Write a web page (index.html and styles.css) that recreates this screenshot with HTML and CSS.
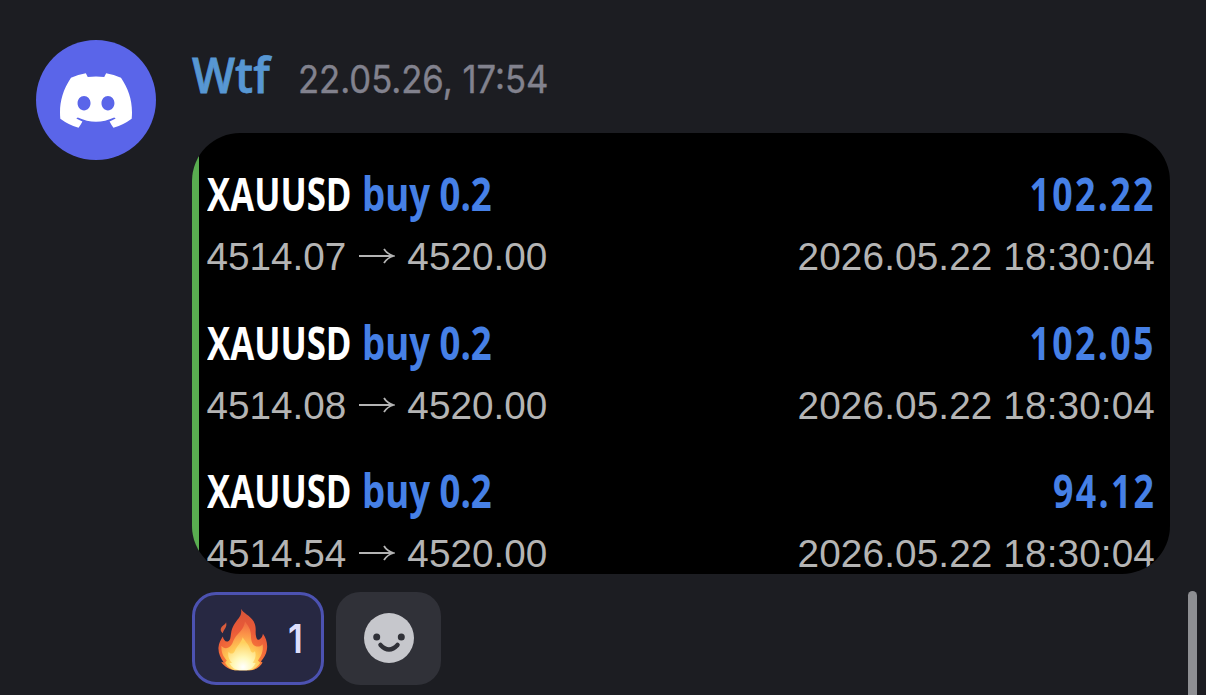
FILE: index.html
```
<!DOCTYPE html>
<html lang="en">
<head>
    <meta charset="UTF-8">
    <meta name="viewport" content="width=device-width, initial-scale=1.0">
    <title>Messages</title>
    <link rel="stylesheet" href="styles.css">
</head>
<body>
    <div class="message">
        <div class="avatar">
            <svg class="avatar-logo" viewBox="0 0 127.14 96.36">
                <path fill="#fff" d="M107.7,8.07A105.15,105.15,0,0,0,81.47,0a72.06,72.06,0,0,0-3.36,6.83A97.68,97.68,0,0,0,49,6.83,72.37,72.37,0,0,0,45.64,0,105.89,105.89,0,0,0,19.39,8.09C2.79,32.65-1.71,56.6.54,80.21h0A105.73,105.73,0,0,0,32.71,96.36,77.7,77.7,0,0,0,39.6,85.25a68.42,68.42,0,0,1-10.85-5.18c.91-.66,1.8-1.34,2.66-2a75.57,75.57,0,0,0,64.32,0c.87.71,1.76,1.39,2.66,2a68.68,68.68,0,0,1-10.87,5.19,77,77,0,0,0,6.89,11.1A105.25,105.25,0,0,0,126.6,80.22h0C129.24,52.84,122.09,29.11,107.7,8.07ZM42.45,65.69C36.18,65.69,31,60,31,53s5-12.74,11.43-12.74S54,46,53.89,53,48.84,65.69,42.45,65.69Zm42.24,0C78.41,65.69,73.25,60,73.25,53s5-12.74,11.44-12.74S96.23,46,96.12,53,91.08,65.69,84.69,65.69Z"/>
            </svg>
        </div>
        <div class="content">
            <div class="header">
                <span class="username">Wtf</span>
                <span class="timestamp">22.05.26, 17:54</span>
            </div>
            <div class="trades">
                <div class="trade">
                    <div class="trade-top">
                        <div class="order"><span class="symbol">XAUUSD</span><span class="side">buy 0.2</span></div>
                        <span class="profit">102.22</span>
                    </div>
                    <div class="trade-bottom">
                        <div class="prices">
                            <span>4514.07</span>
                            <svg class="arrow" viewBox="0 0 36 18"><path d="M0 8H34M25 1Q28 6 34.500 8Q28 10 25 15"/></svg>
                            <span>4520.00</span>
                        </div>
                        <span class="time">2026.05.22 18:30:04</span>
                    </div>
                </div>
                <div class="trade">
                    <div class="trade-top">
                        <div class="order"><span class="symbol">XAUUSD</span><span class="side">buy 0.2</span></div>
                        <span class="profit">102.05</span>
                    </div>
                    <div class="trade-bottom">
                        <div class="prices">
                            <span>4514.08</span>
                            <svg class="arrow" viewBox="0 0 36 18"><path d="M0 8H34M25 1Q28 6 34.500 8Q28 10 25 15"/></svg>
                            <span>4520.00</span>
                        </div>
                        <span class="time">2026.05.22 18:30:04</span>
                    </div>
                </div>
                <div class="trade">
                    <div class="trade-top">
                        <div class="order"><span class="symbol">XAUUSD</span><span class="side">buy 0.2</span></div>
                        <span class="profit">94.12</span>
                    </div>
                    <div class="trade-bottom">
                        <div class="prices">
                            <span>4514.54</span>
                            <svg class="arrow" viewBox="0 0 36 18"><path d="M0 8H34M25 1Q28 6 34.500 8Q28 10 25 15"/></svg>
                            <span>4520.00</span>
                        </div>
                        <span class="time">2026.05.22 18:30:04</span>
                    </div>
                </div>
            </div>
            <div class="reactions">
                <div class="reaction">
                    <svg class="fire" viewBox="0 0 150 190">
                        <defs>
                            <radialGradient id="outer" gradientUnits="userSpaceOnUse" cx="75" cy="165" r="160">
                                <stop offset="0" stop-color="#ffb545"/>
                                <stop offset=".38" stop-color="#f5713a"/>
                                <stop offset=".62" stop-color="#ea5a38"/>
                                <stop offset="1" stop-color="#d85538"/>
                            </radialGradient>
                            <radialGradient id="middle" gradientUnits="userSpaceOnUse" cx="75" cy="170" r="125">
                                <stop offset="0" stop-color="#fff7b0"/>
                                <stop offset=".4" stop-color="#ffcb55"/>
                                <stop offset=".75" stop-color="#fb9048"/>
                                <stop offset="1" stop-color="#ee6c42"/>
                            </radialGradient>
                            <radialGradient id="inner" gradientUnits="userSpaceOnUse" cx="75" cy="178" r="75">
                                <stop offset="0" stop-color="#ffffff"/>
                                <stop offset=".4" stop-color="#fff8b8"/>
                                <stop offset="1" stop-color="#ffcf5c"/>
                            </radialGradient>
                        </defs>
                        <path fill="url(#outer)" d="M69 2C75 16 96 21 107 40C118 60 110 73 115 88C118 98 123 98 128 92C133 88 134 84 135 78C145 91 150 107 147 126C145 140 138 151 129 161L134 164C127 177 113 188 94 188H57C36 188 19 178 9 162L17 164C7 151 0 136 1 119C2 105 8 96 14 86C16 95 22 103 29 101C38 98 37 88 39 77C41 58 52 43 62 31C69 22 71 13 69 2Z"/>
                        <path fill="#d95c3c" d="M24 43C28 59 18 62 14 76C3 67 9 57 16 52C21 49 23 46 24 43Z"/>
                        <path fill="url(#middle)" d="M81 41C91 55 99 65 99 83C99 101 104 114 116 116C124 117 130 115 134 109C138 130 129 147 120 158L127 165C119 178 107 186 94 188H57C40 187 28 178 21 165L26 158C15 146 9 135 10 114C15 120 22 124 31 119C43 113 43 103 50 91C60 75 78 66 81 41Z"/>
                        <path fill="url(#inner)" d="M74 88C80 100 93 109 97 125C99 136 107 137 111 130C116 143 111 155 104 165L113 166C107 179 98 187 86 188H65C51 187 41 179 34 166L42 166C33 156 28 145 31 132C37 140 46 140 51 128C57 114 70 104 74 88Z"/>
                    </svg>
                    <span class="count">1</span>
                </div>
                <div class="add-reaction">
                    <svg class="smile" viewBox="0 0 50 50">
                        <circle cx="25" cy="25" r="25" fill="#c6c7cc"/>
                        <circle cx="12.700" cy="24" r="3.500" fill="#303138"/>
                        <circle cx="37.300" cy="24" r="3.500" fill="#303138"/>
                        <path d="M16.500 32Q25 41 33.500 32" fill="none" stroke="#303138" stroke-width="4.500" stroke-linecap="round"/>
                    </svg>
                </div>
            </div>
        </div>
    </div>
    <div class="scrollbar"></div>
</body>
</html>
```
FILE: styles.css
```
body {
    margin: 0;
    height: 695px;
    overflow: hidden;
    position: relative;
    background-color: #1c1d22;
    font-family: "Open Sans", sans-serif;
}

.message {
    display: flex;
    gap: 36px;
    padding: 40px 36px 0;
}

.avatar {
    display: flex;
    align-items: center;
    justify-content: center;
    flex-shrink: 0;
    width: 120px;
    height: 120px;
    border-radius: 50%;
    background-color: #5a65e9;
}

.avatar-logo {
    width: 72px;
    height: 55px;
}

.content {
    width: 978px;
    flex-shrink: 0;
}

.header {
    display: flex;
    align-items: baseline;
    height: 93px;
    line-height: 70px;
    white-space: nowrap;
}

.username {
    width: 105px;
    font-size: 48px;
    font-weight: 600;
    color: #5797d3;
    -webkit-text-stroke: 0.8px #5797d3;
    transform: scaleX(0.95);
    transform-origin: left;
}

.timestamp {
    padding-left: 1px;
    font-family: Inter, sans-serif;
    font-size: 38.5px;
    color: #82828e;
    -webkit-text-stroke: 0.4px #82828e;
    transform: scaleX(0.9);
    transform-origin: left;
}

/* green edge is straight, the rounded corners clip it */
.trades {
    box-sizing: border-box;
    height: 441px;
    padding: 30px 15px 0 14.5px;
    border-radius: 48px;
    overflow: hidden;
    background: linear-gradient(to right, #59ad50 7px, #000 7px);
}

.trade {
    height: 148.6px;
}

.trade-top,
.trade-bottom {
    display: flex;
    justify-content: space-between;
    white-space: nowrap;
}

.trade-top {
    height: 62px;
    line-height: 60px;
    font-size: 46px;
    font-weight: 700;
    color: #4680e6;
}

.order {
    display: flex;
}

.symbol {
    width: 155px;
    color: #fff;
    transform: scaleX(0.755);
    transform-origin: left;
}

.side {
    transform: scaleX(0.795);
    transform-origin: left;
}

.profit {
    margin-right: -1px;
    letter-spacing: 3px;
    transform: scaleX(0.775);
    transform-origin: right;
}

.trade-bottom {
    height: 64px;
    line-height: 64px;
    font-family: "Liberation Sans", Arial, sans-serif;
    font-size: 38.7px;
    color: #b4b4b4;
}

.time {
    letter-spacing: 0.13px;
}

.prices {
    display: flex;
    align-items: center;
}

.arrow {
    width: 36px;
    height: 18px;
    margin: 0 12.500px;
    fill: none;
    stroke: #b4b4b4;
    stroke-width: 1.8;
}

.reactions {
    display: flex;
    gap: 12px;
    margin-top: 18px;
}

.reaction,
.add-reaction {
    display: flex;
    align-items: center;
    box-sizing: border-box;
    height: 93px;
    border-radius: 24px;
}

.reaction {
    width: 132px;
    padding-left: 23px;
    gap: 20px;
    border: 3px solid #4c52b1;
    background-color: #272842;
}

.fire {
    width: 50px;
    height: 63px;
    margin-top: 2px;
}

.count {
    font-family: Inter, sans-serif;
    font-size: 40px;
    font-weight: 600;
    color: #dedffc;
    transform: scaleX(0.88);
    transform-origin: left;
}

.add-reaction {
    justify-content: center;
    width: 105px;
    background-color: #303138;
}

.smile {
    width: 50px;
    height: 50px;
    margin-bottom: 2px;
}

.scrollbar {
    position: absolute;
    top: 591px;
    right: 9px;
    width: 9px;
    height: 120px;
    border-radius: 5px;
    background-color: #8e8f93;
}
```
